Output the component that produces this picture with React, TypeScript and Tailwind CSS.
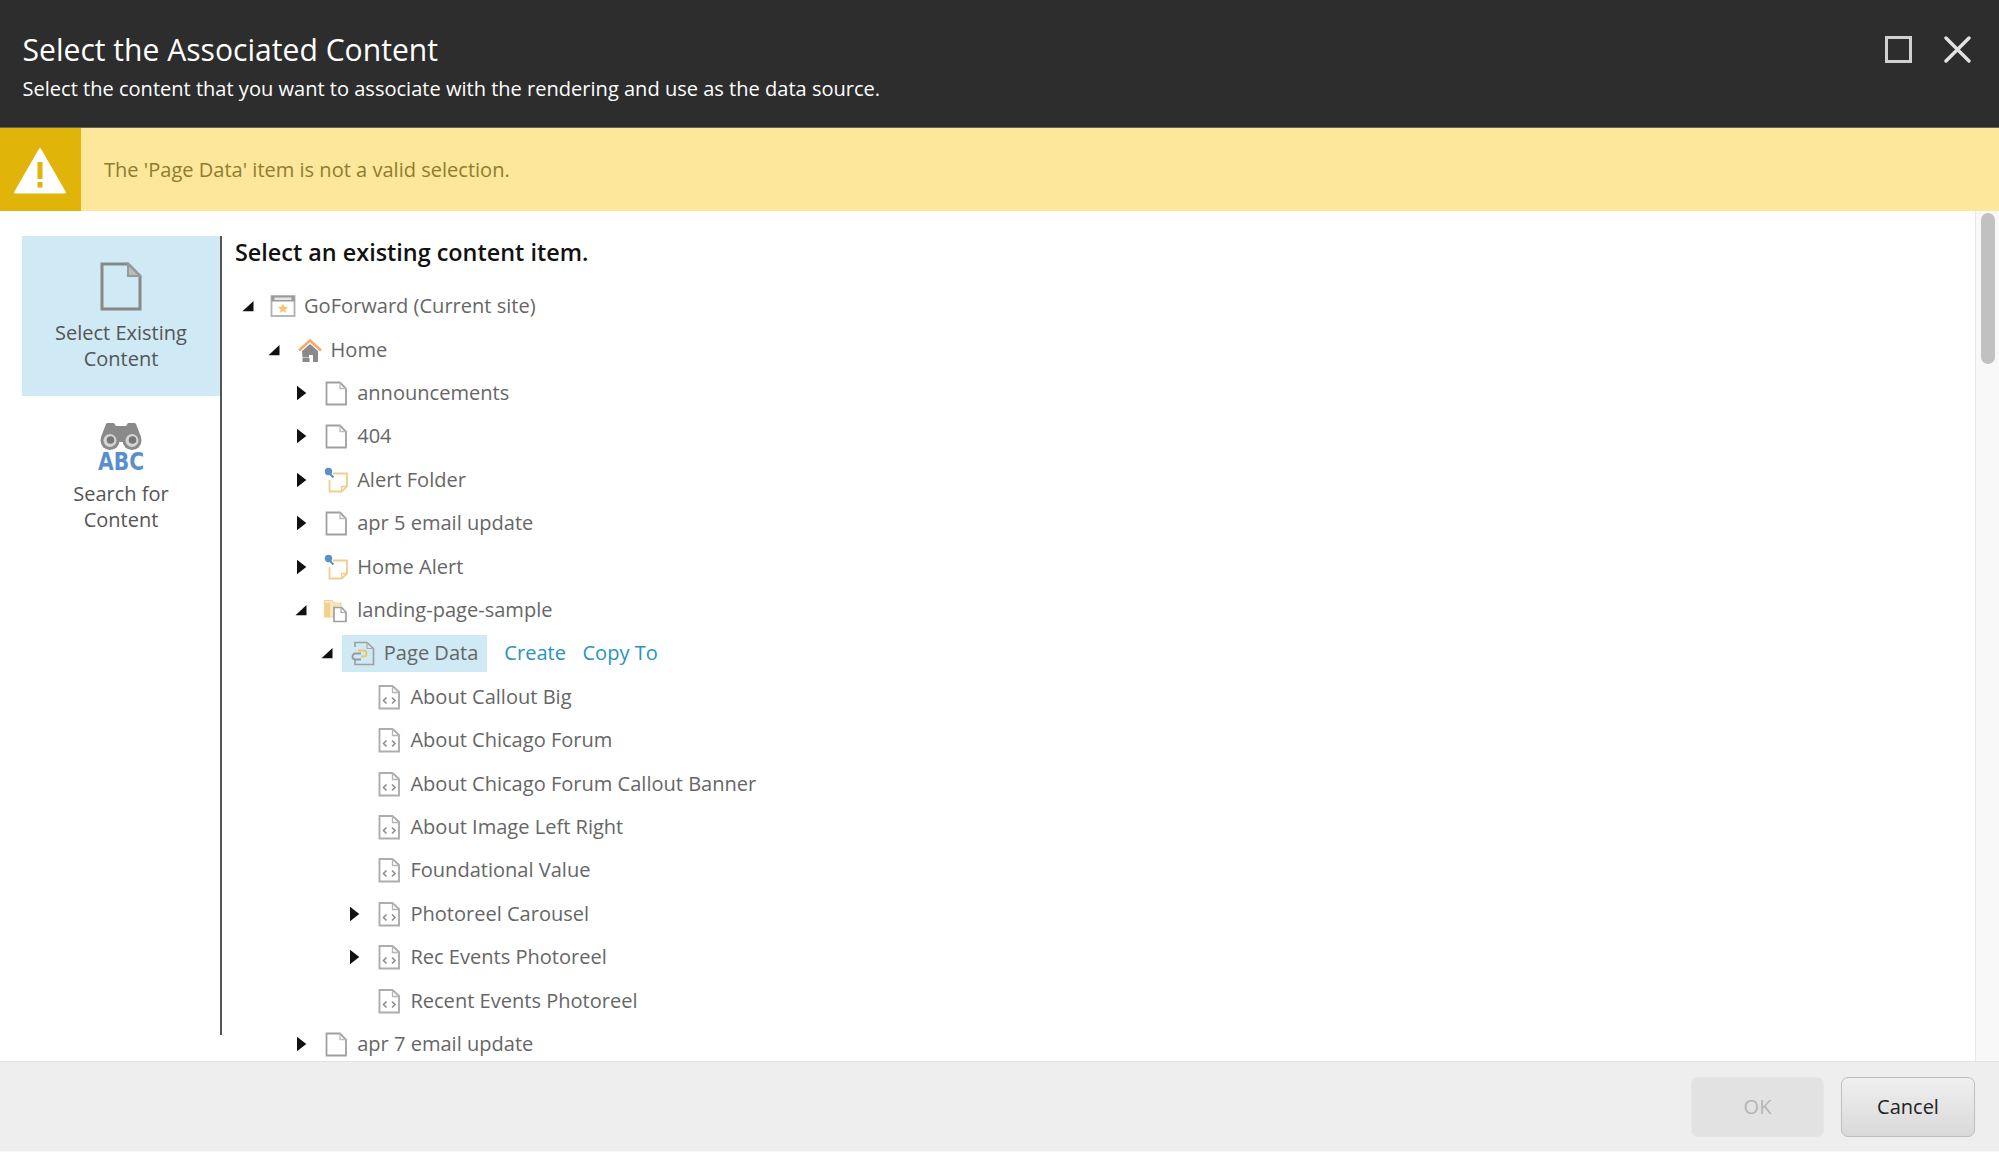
import React from "react";

const Down = () => (
  <svg width="14" height="14" viewBox="0 0 14 14" className="block"><path d="M12.500 2V12.300H1.500z" fill="#111" /></svg>
);
const Right = () => (
  <svg width="14" height="18" viewBox="0 0 14 18" className="block"><path d="M3 1.700l9.300 7.300L3 16.300z" fill="#111" /></svg>
);

const Doc = () => (
  <svg width="24" height="26" viewBox="0 0 24 26" fill="none">
    <path d="M2.500 2.500H16L22 8.500V24.500H2.500z" stroke="#a0a0a0" strokeWidth="1.800" fill="#fff" />
    <path d="M16 2.500v6h6" stroke="#bbb" strokeWidth="1.300" />
  </svg>
);
const Site = () => (
  <svg width="26" height="24" viewBox="0 0 26 24" fill="none">
    <rect x="1.500" y="2" width="23" height="20" fill="#fff" stroke="#b0b0b0" strokeWidth="1.800" />
    <rect x="1.500" y="2" width="23" height="5.500" fill="#9a9a9a" />
    <rect x="4.500" y="3.500" width="17" height="2.500" fill="#e6e6e6" />
    <path d="M13 9.500l1.500 3.200 3.600.4-2.700 2.300.8 3.600-3.200-1.900-3.200 1.900.8-3.600-2.700-2.300 3.600-.4z" fill="#f4c674" />
  </svg>
);
const HomeIc = () => (
  <svg width="26" height="26" viewBox="0 0 26 26" fill="none">
    <path d="M2 13.500L13 3.500l11 10" stroke="#f4a869" strokeWidth="2.600" />
    <path d="M5 14L13 7l8 7V25h-5v-7h-4v2.500H5.500z" fill="#8a8a8a" />
    <rect x="5.500" y="21" width="7" height="4" fill="#8a8a8a" />
  </svg>
);
const Pin = () => (
  <svg width="26" height="26" viewBox="0 0 26 26" fill="none">
    <path d="M10 6.500H24V19.500L18.500 24.500H6.500V13" stroke="#f1cd8b" strokeWidth="1.800" />
    <path d="M18.500 24.500V19.500H24" stroke="#f1cd8b" strokeWidth="1.300" />
    <circle cx="5.500" cy="4.500" r="3.700" fill="#5a8fc9" />
    <path d="M7 7l3.500 3.500" stroke="#5a8fc9" strokeWidth="2" />
  </svg>
);
const FolderDoc = () => (
  <svg width="26" height="26" viewBox="0 0 26 26" fill="none">
    <path d="M1.500 20V3.500H9L11 6h7v3H11v11z" fill="#fbe6bf" stroke="#f3d49a" strokeWidth="1.200" />
    <rect x="2" y="6" width="5" height="14" fill="#f4cf8a" />
    <path d="M11 10.500h7.500l4.500 4.500v9.500H11z" fill="#fff" stroke="#a0a0a0" strokeWidth="1.700" />
    <path d="M18 10.500v5h5" stroke="#aaa" strokeWidth="1.200" />
  </svg>
);
const LinkDoc = () => (
  <svg width="26" height="26" viewBox="0 0 26 26" fill="none">
    <path d="M5 7V2.500H17L23.500 8.500V24.500H5V19" stroke="#a0a0a0" strokeWidth="1.700" />
    <path d="M17 2.500V8.500H23.500" stroke="#aaa" strokeWidth="1.200" />
    <path d="M8 10.500h5.500a3 3 0 010 6H11" stroke="#f0c268" strokeWidth="1.800" />
    <path d="M11 13.500H5.500a3 3 0 000 6H11" stroke="#999" strokeWidth="1.800" />
  </svg>
);
const CodeDoc = () => (
  <svg width="24" height="26" viewBox="0 0 24 26" fill="none">
    <path d="M2.500 2H15.500L22 8V24.500H2.500z" stroke="#adadad" strokeWidth="1.900" fill="#fff" />
    <path d="M15.500 2v6.500H22" stroke="#b5b5b5" strokeWidth="1.300" />
    <path d="M9.500 13.500L6.500 16.500 9.500 19.500M15 13.500L18 16.500 15 19.500" stroke="#8d8d8d" strokeWidth="1.600" />
  </svg>
);

type Row = { d: number; t: "down" | "right" | null; icon: React.ReactNode; text: string; sel?: boolean };

const rows: Row[] = [
  { d: 0, t: "down", icon: <Site />, text: "GoForward (Current site)" },
  { d: 1, t: "down", icon: <HomeIc />, text: "Home" },
  { d: 2, t: "right", icon: <Doc />, text: "announcements" },
  { d: 2, t: "right", icon: <Doc />, text: "404" },
  { d: 2, t: "right", icon: <Pin />, text: "Alert Folder" },
  { d: 2, t: "right", icon: <Doc />, text: "apr 5 email update" },
  { d: 2, t: "right", icon: <Pin />, text: "Home Alert" },
  { d: 2, t: "down", icon: <FolderDoc />, text: "landing-page-sample" },
  { d: 3, t: "down", icon: <LinkDoc />, text: "Page Data", sel: true },
  { d: 4, t: null, icon: <CodeDoc />, text: "About Callout Big" },
  { d: 4, t: null, icon: <CodeDoc />, text: "About Chicago Forum" },
  { d: 4, t: null, icon: <CodeDoc />, text: "About Chicago Forum Callout Banner" },
  { d: 4, t: null, icon: <CodeDoc />, text: "About Image Left Right" },
  { d: 4, t: null, icon: <CodeDoc />, text: "Foundational Value" },
  { d: 4, t: "right", icon: <CodeDoc />, text: "Photoreel Carousel" },
  { d: 4, t: "right", icon: <CodeDoc />, text: "Rec Events Photoreel" },
  { d: 4, t: null, icon: <CodeDoc />, text: "Recent Events Photoreel" },
  { d: 2, t: "right", icon: <Doc />, text: "apr 7 email update" },
];

export default function App() {
  return (
    <div className="flex h-[1152px] w-[1999px] flex-col overflow-hidden bg-white font-['Open_Sans',sans-serif] text-[#666]">
      <header className="flex h-[128px] shrink-0 items-start justify-between border-b border-[#6b6449] bg-[#2d2d2d] pl-[22.500px] pr-[28px] text-white">
        <div>
          <h1 className="mt-[29px] text-[30.100px] leading-[41px] font-normal">Select the Associated Content</h1>
          <p className="mt-[5px] text-[20.060px] leading-[27px]">Select the content that you want to associate with the rendering and use as the data source.</p>
        </div>
        <div className="mt-[36px] flex items-center gap-[32px]">
          <svg width="27" height="27" viewBox="0 0 27 27" fill="none"><rect x="1.500" y="1.500" width="24" height="24" stroke="#d0d0d0" strokeWidth="3" /></svg>
          <svg width="27" height="27" viewBox="0 0 27 27" fill="none"><path d="M2 2l23 23M25 2L2 25" stroke="#e2e2e2" strokeWidth="3.400" strokeLinecap="round" /></svg>
        </div>
      </header>

      <div className="flex h-[83px] shrink-0 items-center bg-[#fce79b]">
        <div className="flex h-full w-[81px] items-center justify-center bg-[#e0b408] pr-[2px]">
          <svg width="54" height="50" viewBox="0 0 54 50"><path d="M27 4L52 47.500H2z" fill="#fff" stroke="#fff" strokeWidth="2" strokeLinejoin="round" /><rect x="24.500" y="17" width="5" height="17" fill="#e0b408" /><rect x="24.500" y="37" width="5" height="5.500" fill="#e0b408" /></svg>
        </div>
        <span className="ml-[23px] pt-[1px] text-[20.060px] text-[#8f7c2f]">The 'Page Data' item is not a valid selection.</span>
      </div>

      <main className="flex min-h-0 flex-1">
        <aside className="mt-[25px] mb-[26px] ml-[22px] w-[200px] shrink-0 border-r-2 border-[#555]">
          <div className="flex h-[160px] flex-col items-center bg-[#cfe9f5] pt-[26px] text-center text-[20px] leading-[26.500px] text-[#555]">
            <svg width="44" height="50" viewBox="0 0 44 50" fill="none">
              <path d="M3 2H29L41 14V47H3z" stroke="#888" strokeWidth="3" />
              <path d="M29 2V14H41z" fill="#bbb" stroke="#999" strokeWidth="2" />
            </svg>
            <span className="mt-[7.500px]">Select Existing<br />Content</span>
          </div>
          <div className="flex h-[160px] flex-col items-center pt-[25px] text-center text-[20px] leading-[26.500px] text-[#555]">
            <svg width="62" height="56" viewBox="0 0 62 56">
              <g transform="translate(6 0)">
                <path d="M5 16L10 3a2 2 0 012-1h6l2 3h10l2-3h6a2 2 0 012 1L45 16z" fill="#8a8a8a" />
                <rect x="18" y="6" width="14" height="15" fill="#8a8a8a" />
                <circle cx="14" cy="19.500" r="9.500" fill="#8a8a8a" />
                <circle cx="36" cy="19.500" r="9.500" fill="#8a8a8a" />
                <circle cx="14" cy="19.500" r="6.500" fill="#d4d4d4" /><circle cx="14.500" cy="19" r="3.800" fill="#777" />
                <circle cx="36" cy="19.500" r="6.500" fill="#d4d4d4" /><circle cx="36.500" cy="19" r="3.800" fill="#777" />
                <text x="25" y="49" textAnchor="middle" textLength="46" lengthAdjust="spacingAndGlyphs" fill="#5a8fc9" fontFamily="'DejaVu Sans', sans-serif" fontWeight="700" fontSize="24">ABC</text>
              </g>
            </svg>
            <span className="mt-[3.500px]">Search for<br />Content</span>
          </div>
        </aside>

        <section className="min-w-0 flex-1 pt-[25.500px] pl-[13px]">
          <h2 className="text-[23.400px] leading-[30px] font-semibold text-[#111]">Select an existing content item.</h2>
          <ul className="mt-[18px] pl-[3px]">
            {rows.map((r) => (
              <li key={r.text} className="flex h-[43.420px] items-center" style={{ paddingLeft: r.d * 26.6 }}>
                <span className={r.sel ? "flex h-[37px] items-center" : "flex items-center"}>
                  <span className="flex w-[19px] shrink-0 items-center justify-center">
                    {r.t === "down" ? <Down /> : r.t === "right" ? <Right /> : null}
                  </span>
                  <span className={r.sel ? "ml-[5px] flex h-[37px] items-center bg-[#cfe9f5] pr-[9px] pl-[8px]" : "flex items-center"}>
                    <span className={r.sel ? "flex w-[26px] shrink-0 items-center justify-center" : "ml-[13px] flex w-[26px] shrink-0 items-center justify-center"}>{r.icon}</span>
                    <span className="ml-[8px] text-[20.060px] whitespace-nowrap">{r.text}</span>
                  </span>
                  {r.sel && (
                    <span className="ml-[17px] flex gap-[16.500px] text-[20.060px] text-[#2a93c1]">
                      <span>Create</span>
                      <span>Copy To</span>
                    </span>
                  )}
                </span>
              </li>
            ))}
          </ul>
        </section>

        <div className="w-[24px] shrink-0 border-x border-x-[#e8e8e8] border-r-[#f8f8f8] bg-[#f8f8f8] pt-[2px] pl-[5px]">
          <div className="h-[151px] w-[14px] rounded-[7px] bg-[#c1c1c1]" />
        </div>
      </main>

      <footer className="flex h-[91px] shrink-0 items-start justify-end gap-[17px] border-t border-b border-t-[#e3e3e3] border-b-[#f6f6f6] bg-[#eeeeee] pt-[15px] pr-[24px]">
        <button className="h-[60px] w-[133px] rounded-[7px] border border-[#e6e6e6] bg-[#e2e2e2] text-[20px] text-[#b5b5b5]">OK</button>
        <button className="h-[60px] w-[134px] rounded-[7px] border border-[#bdbdbd] bg-gradient-to-b from-[#f0f0f0] to-[#d9d9d9] text-[20px] text-[#222]">Cancel</button>
      </footer>
    </div>
  );
}
